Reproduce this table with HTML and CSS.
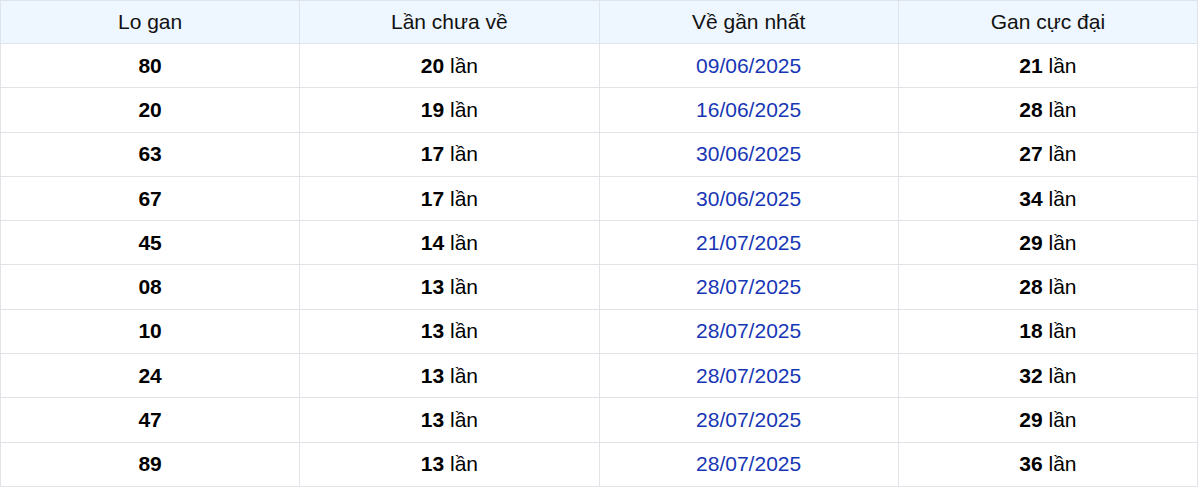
FILE: index.html
```html
<!DOCTYPE html>
<html lang="vi">
<head>
<meta charset="utf-8">
<title>Lo gan</title>
<link rel="stylesheet" href="styles.css">
</head>
<body>
<table class="gan-table">
  <thead>
    <tr>
      <th>Lo gan</th>
      <th>Lần chưa về</th>
      <th>Về gần nhất</th>
      <th>Gan cực đại</th>
    </tr>
  </thead>
  <tbody>
    <tr><td><b>80</b></td><td><b>20</b> lần</td><td class="date">09/06/2025</td><td><b>21</b> lần</td></tr>
    <tr><td><b>20</b></td><td><b>19</b> lần</td><td class="date">16/06/2025</td><td><b>28</b> lần</td></tr>
    <tr><td><b>63</b></td><td><b>17</b> lần</td><td class="date">30/06/2025</td><td><b>27</b> lần</td></tr>
    <tr><td><b>67</b></td><td><b>17</b> lần</td><td class="date">30/06/2025</td><td><b>34</b> lần</td></tr>
    <tr><td><b>45</b></td><td><b>14</b> lần</td><td class="date">21/07/2025</td><td><b>29</b> lần</td></tr>
    <tr><td><b>08</b></td><td><b>13</b> lần</td><td class="date">28/07/2025</td><td><b>28</b> lần</td></tr>
    <tr><td><b>10</b></td><td><b>13</b> lần</td><td class="date">28/07/2025</td><td><b>18</b> lần</td></tr>
    <tr><td><b>24</b></td><td><b>13</b> lần</td><td class="date">28/07/2025</td><td><b>32</b> lần</td></tr>
    <tr><td><b>47</b></td><td><b>13</b> lần</td><td class="date">28/07/2025</td><td><b>29</b> lần</td></tr>
    <tr><td><b>89</b></td><td><b>13</b> lần</td><td class="date">28/07/2025</td><td><b>36</b> lần</td></tr>
  </tbody>
</table>
</body>
</html>
```
FILE: styles.css
```css
html, body {
  margin: 0;
  padding: 0;
  background: #ffffff;
}
.gan-table {
  width: 1198px;
  border-collapse: collapse;
  table-layout: fixed;
  font-family: "Liberation Sans", Arial, sans-serif;
  font-size: 21px;
  color: #000000;
}
.gan-table th,
.gan-table td {
  border: 1px solid #e0e3e8;
  text-align: center;
  vertical-align: middle;
  padding: 0;
}
.gan-table th {
  height: 42px;
  background: #eef6ff;
  font-weight: normal;
  color: #111111;
}
.gan-table td {
  height: 43.3px;
}
.gan-table b {
  font-weight: bold;
}
.gan-table td.date {
  color: #1736b5;
}
```
